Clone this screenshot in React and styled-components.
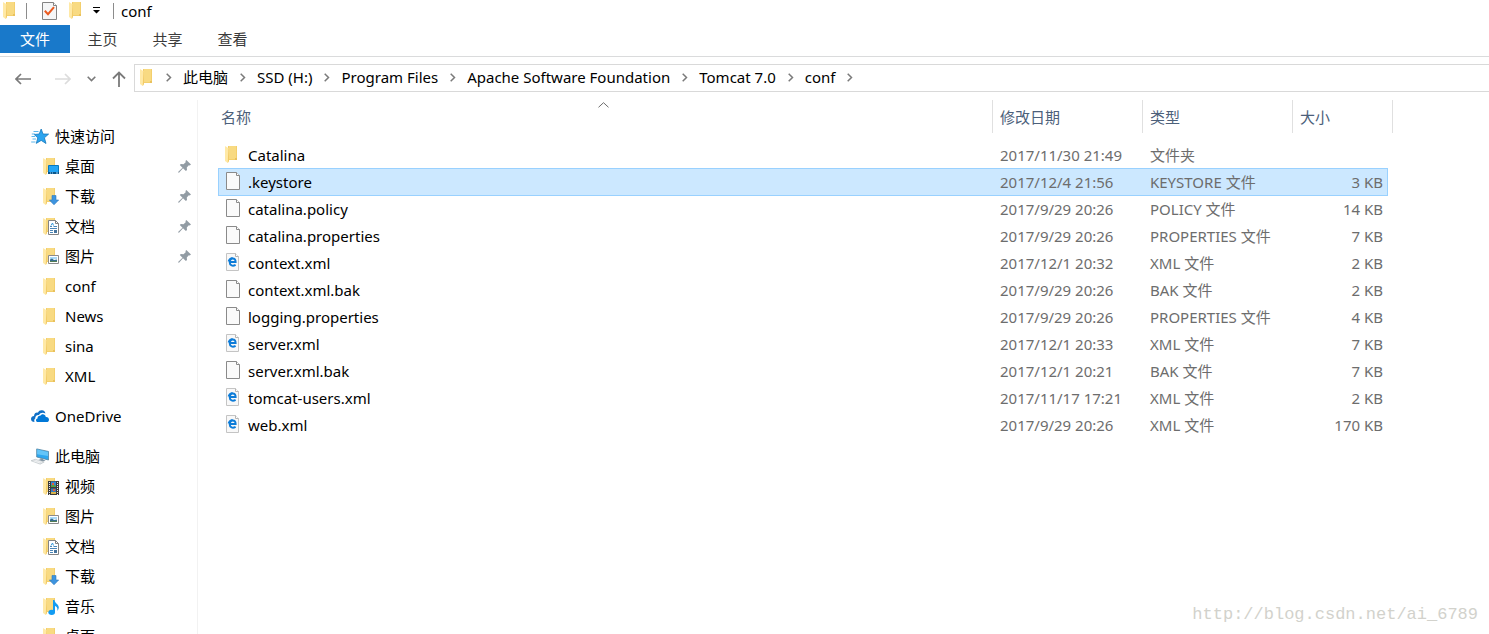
import React, { useState } from 'react'
import styled, { createGlobalStyle } from 'styled-components'

const GlobalStyle = createGlobalStyle`
  body {
    margin: 0;
    background: #ffffff;
    color: #000000;
    font-family: "Noto Sans", "Noto Sans CJK SC", sans-serif;
    font-size: 15px;
    line-height: 20px;
  }
  * {
    box-sizing: border-box;
  }
  button {
    margin: 0;
    padding: 0;
    border: 0;
    background: none;
    color: inherit;
    font: inherit;
  }
  a {
    color: inherit;
    text-decoration: none;
  }
  svg {
    display: block;
    flex: none;
  }
`

const Window = styled.div`
  display: flex;
  flex-direction: column;
  height: 100vh;
  overflow: hidden;
`

const TitleBar = styled.header`
  display: flex;
  align-items: center;
  height: 25px;
  padding: 0 3px 4px;
`

const QuickButton = styled.button`
  display: flex;
  margin-right: ${(p) => p.$after || 12}px;
`

const Divider = styled.span`
  width: 1px;
  height: 16px;
  margin-right: ${(p) => p.$after}px;
  background: #8c8c8c;
`

const WindowTitle = styled.h1`
  margin: 0;
  font-size: 15px;
  font-weight: 400;
`

const Ribbon = styled.nav`
  display: flex;
  height: 32px;
  padding-bottom: 3px;
  border-bottom: 1px solid #dadbdc;
`

const RibbonTab = styled.button`
  width: ${(p) => (p.$active ? 70 : 65)}px;
  background: ${(p) => (p.$active ? '#1979ca' : 'transparent')};
  color: ${(p) => (p.$active ? '#ffffff' : '#3b3b3b')};
`

const AddressRow = styled.div`
  display: flex;
  align-items: center;
  height: 43px;
  padding: 0 0 1px 15px;
`

const NavButtons = styled.div`
  display: flex;
  align-items: center;
  gap: 16px;
  padding: 1px 8px 0 0;
`

const NavButton = styled.button`
  display: flex;
  padding-right: ${(p) => (p.$wide ? 8 : 0)}px;
`

const AddressBar = styled.div`
  display: flex;
  flex: 1;
  align-items: center;
  height: 28px;
  padding: 0 0 2px 5px;
  border: 1px solid #d9d9d9;
  border-right: 0;
`

const Crumbs = styled.ol`
  display: flex;
  margin: 0;
  padding: 0 0 0 14px;
  list-style: none;
`

const Crumb = styled.li`
  display: flex;
  align-items: center;
  gap: 12px;
  padding-right: 11px;
`

const Body = styled.div`
  display: flex;
  flex: 1;
  min-height: 0;
`

const Sidebar = styled.nav`
  flex: none;
  width: 198px;
  padding-top: 21px;
  border-right: 1px solid #f2f2f2;
  overflow: hidden;
`

const Group = styled.div`
  margin-bottom: 10px;
`

const SideLink = styled.a`
  display: flex;
  align-items: center;
  gap: 6px;
  height: 30px;
  padding: 0 6px 0 ${(p) => (p.$root ? 31 : 43)}px;
`

const SideLabel = styled.span`
  flex: 1;
`

const Content = styled.main`
  flex: 1;
  padding: 0 96px 0 20px;
`

const FileTable = styled.table`
  width: 100%;
  border-collapse: separate;
  border-spacing: 0;
  table-layout: fixed;
`

const NameCol = styled.col``
const WideCol = styled.col`
  width: 150px;
`
const SizeCol = styled.col`
  width: 96px;
`
const EdgeCol = styled.col`
  width: 5px;
`

const HeadCell = styled.th`
  position: relative;
  height: 33px;
  padding: 0 0 0 ${(p) => (p.$first ? 3 : 7)}px;
  border-left: ${(p) => (p.$first ? 0 : '1px solid #e0e0e0')};
  border-right: ${(p) => (p.$last ? '1px solid #e0e0e0' : 0)};
  color: #4c607a;
  font-weight: 400;
  text-align: left;
`

const SortMark = styled.span`
  position: absolute;
  top: 2px;
  left: 0;
  right: 2px;
  display: flex;
  justify-content: center;
`

const FileBody = styled.tbody`
  &::before {
    content: '';
    display: block;
    height: 8px;
  }
`

const Cell = styled.td`
  height: 27px;
  padding: 0 5px 0 ${(p) => (p.$first ? 7 : 8)}px;
  color: ${(p) => (p.$first ? '#000000' : '#6d6d6d')};
  text-align: ${(p) => (p.$right ? 'right' : 'left')};
  white-space: nowrap;
`

const EdgeCell = styled.td`
  padding: 0;
`

const FileRow = styled.tr`
  ${(p) => p.$selected && `
    ${Cell} {
      background: #cce8ff;
      box-shadow: inset 0 1px #99d1ff, 0 1px #99d1ff;
    }
    ${Cell}:first-child {
      box-shadow: inset 1px 1px #99d1ff, 0 1px #99d1ff;
    }
    ${Cell}:nth-child(4) {
      box-shadow: inset -1px 1px #99d1ff, 0 1px #99d1ff;
    }
  `}
`

const FileName = styled.div`
  display: flex;
  align-items: center;
  gap: 7px;
`

const Watermark = styled.div`
  position: absolute;
  right: 11px;
  bottom: 9px;
  color: #d2d2cc;
  font-family: "Liberation Mono", monospace;
  font-size: 17px;
`

const FolderShape = () => (
  <>
    <path d="M3 0H12V14H3Z" fill="#f3cf6d" />
    <path d="M4 0H11V13H4Z" fill="#f8da82" />
    <path d="M10 12H12V14H10Z" fill="#e9c15d" />
    <path d="M0 0L4 2.6V15L2.8 17L0 15Z" fill="#ffe9a6" />
    <path d="M3.5 2.3L4 2.6V15L2.8 17V15Z" fill="#f2cb68" />
  </>
)

const FolderIcon = () => (
  <svg width="12" height="17" viewBox="0 0 12 17">
    <FolderShape />
  </svg>
)

const DocShape = () => (
  <>
    <path d="M5.5 2.5H12.5L15.5 5.5V16.5H5.5Z" fill="#ffffff" stroke="#838383" />
    <path d="M12.5 2.5V5.5H15.5" fill="none" stroke="#838383" />
    <path d="M7 8.5H9M10.5 8.5H14M7 10.5H14M7 12.5H10M7 14.5H10" stroke="#4b86b8" />
    <path d="M8 7.5L9.5 5L10.5 7.5" fill="none" stroke="#3498db" />
    <path d="M11 12H14V15H11Z" fill="#47759e" />
  </>
)

const overlays = {
  desktop: (
    <>
      <path d="M5.5 7.5H15.5V15.5H5.5Z" fill="#23a5f5" stroke="#0878be" />
      <path d="M5 14H16V16H5Z" fill="#0a568b" />
      <path d="M7 15H8M9 15H10M13 15H15" stroke="#9ed8ff" />
    </>
  ),
  download: <path d="M9 7.5H13V12H15.7L11 16.8L6.3 12H9Z" fill="#3d94df" stroke="#2d78bd" strokeWidth="0.6" />,
  document: <DocShape />,
  picture: (
    <>
      <path d="M5.5 7.5H15.5V15.5H5.5Z" fill="#ffffff" stroke="#8b8b8b" />
      <path d="M7 9H14V11H7Z" fill="#a8daf8" />
      <path d="M7 11.5L9 10.5L11 12L14 11.5V14H7Z" fill="#376d8f" />
      <path d="M7 13H14V14H7Z" fill="#537d55" />
    </>
  ),
  video: (
    <>
      <path d="M5 3H16V17H5Z" fill="#3b3b3b" />
      <path d="M6.5 4V17M14.5 4V17" stroke="#e8e8e8" strokeDasharray="1 1" />
      <path d="M8 3.5H13V9H8Z" fill="#3384cf" />
      <path d="M8 10.5H13V16H8Z" fill="#347bc3" />
      <path d="M8 7.5L10 6L13 8V9H8Z" fill="#53a047" />
      <path d="M9 5H11V7H9ZM10 11H12V13H10Z" fill="#e65c38" />
      <path d="M8 14H13V16H8Z" fill="#d7b44b" />
    </>
  ),
  music: (
    <>
      <path d="M10 2H11.5C11.5 5 16 6.5 15.8 9.5C15.7 11 15 12.3 14.3 13C15 9.8 13.5 8.6 12 8V14H10Z" fill="#129cf3" />
      <ellipse cx="8.7" cy="14.3" rx="3.3" ry="2.6" fill="#129cf3" />
    </>
  ),
}

const LibraryIcon = ({ kind }) => (
  <svg width="16" height="17" viewBox="0 0 16 17">
    <FolderShape />
    {overlays[kind]}
  </svg>
)

const StarIcon = () => (
  <svg width="18" height="17" viewBox="0 0 18 17">
    <path d="M10.2 1L12 6L17.6 6.1L13.4 9.8L15 15.5L10.2 12.4L5.3 15.4L6.8 9.8L3.2 6.5L8.2 6Z" fill="#2ba4ef" stroke="#1679bd" strokeWidth="0.8" />
    <path d="M2.5 3.5H7.5M0.8 6H4M0.5 8.5H4M1.5 11H5M0.2 14H4.5" stroke="#4aaeea" strokeWidth="0.9" />
  </svg>
)

const CloudIcon = () => (
  <svg width="18" height="13" viewBox="0 0 18 13">
    <path d="M0 9C0 7 1.5 6 3 6C3.2 3.5 5 2.3 6.8 2.7C7.7 0.7 9.3 0 11 0.2C13 0.4 14.2 1.8 14.4 3.5C11.8 2 9 3 8 5C5.5 4.8 4 6.5 4.3 8.5C3.2 9 3 10.5 3.5 12C1.4 12 0 10.8 0 9Z" fill="#0f6fc6" />
    <path d="M5 10.5C4.8 9.3 5.6 8.6 6.5 8.4C6.4 6.5 8 5.3 9.4 5.8C10.3 3.6 14.4 3.6 14.8 7C16.8 6.8 18 8.2 18 9.7C18 11.2 17 12 15.8 12H6.7C5.7 12 5.1 11.4 5 10.5Z" fill="#0078d7" />
  </svg>
)

const ComputerIcon = () => (
  <svg width="18" height="17" viewBox="0 0 19 17">
    <path d="M6 0.5L18.5 3.2V12.2L6 9Z" fill="#2ea7ef" stroke="#4e7f9c" strokeWidth="0.8" />
    <path d="M6.5 1.2L18 3.8V8L6.5 6Z" fill="#64c5f8" />
    <path d="M10 10.2L13 11V12L15.5 12.7L12.5 13.8L7.5 12.3L10 11.5Z" fill="#8496a3" />
    <path d="M0 13L4.5 11.4L14 14.3L9.7 16.6Z" fill="#d9dde0" stroke="#adb4b9" strokeWidth="0.5" />
    <path d="M2.5 13.2L9.8 15.4M4.5 12.4L11.8 14.6" stroke="#ffffff" strokeWidth="0.6" />
  </svg>
)

const PinIcon = () => (
  <svg width="13" height="13" viewBox="0 0 13 13">
    <path d="M8.3 0L13 4.6L11.7 5.4L10.8 5.2L8.8 7.4L9 10L7.9 11L5 8.3L1 12.7L0.2 12.6L0.3 11.8L4.5 7.8L1.8 5L2.8 4L5.5 4.2L7.7 2.2L7.5 1Z" fill="#929ca4" />
  </svg>
)

const FileIcon = () => (
  <svg width="16" height="20" viewBox="0 0 16 20">
    <path d="M1.5 0.5H11.5L14.5 3.5V17.5H1.5Z" fill="#fafafa" stroke="#8a8a8a" />
    <path d="M11.5 0.5V3.5H14.5" fill="#ffffff" stroke="#8a8a8a" />
  </svg>
)

const XmlIcon = () => (
  <svg width="16" height="20" viewBox="0 0 16 20">
    <path d="M1.5 0.5H10.5L13.5 3.5V17.5H1.5Z" fill="#f8f8f8" stroke="#c4c4c4" />
    <path d="M10.5 0.5V3.5H13.5" fill="#ffffff" stroke="#b5b5b5" />
    <path d="M4.6 9.1H10.6C10.6 6.9 9.6 5.5 7.8 5.5C5.9 5.5 4.7 7 4.7 9C4.7 12.8 7.8 13.4 10.6 11.9" fill="none" stroke="#0d7cd8" strokeWidth="2" />
    <path d="M3.2 8.4C4 6.2 5.4 4.9 7.6 4.6" fill="none" stroke="#0d7cd8" strokeWidth="1.2" />
  </svg>
)

const PropertiesIcon = () => (
  <svg width="15" height="18" viewBox="0 0 15 18">
    <path d="M0.5 0.5H11.5L14.5 3.5V17.5H0.5Z" fill="#f5f6f7" stroke="#848484" />
    <path d="M11.5 0.5V3.5H14.5" fill="#ffffff" stroke="#848484" />
    <path d="M2.8 8.8L6 12.2L12 5.2" fill="none" stroke="#ea5a20" strokeWidth="2" />
  </svg>
)

const MenuMark = () => (
  <svg width="7" height="7" viewBox="0 0 7 7">
    <path d="M0 0H7V1H0ZM0 3H7L3.5 6.5Z" fill="#000000" />
  </svg>
)

const ArrowIcon = ({ color, flip }) => (
  <svg width="16" height="12" viewBox="0 0 16 12">
    <path d={flip ? 'M0 6H15M10 1L15 6L10 11' : 'M16 6H1M6 1L1 6L6 11'} fill="none" stroke={color} strokeWidth="1.7" />
  </svg>
)

const UpIcon = () => (
  <svg width="14" height="16" viewBox="0 0 14 16">
    <path d="M7 16V1.5M1 7.5L7 1.5L13 7.5" fill="none" stroke="#7a7a7a" strokeWidth="1.8" />
  </svg>
)

const ChevronDown = () => (
  <svg width="9" height="6" viewBox="0 0 9 6">
    <path d="M0.7 0.7L4.5 4.5L8.3 0.7" fill="none" stroke="#7a7a7a" strokeWidth="1.6" />
  </svg>
)

const ChevronRight = () => (
  <svg width="6" height="9" viewBox="0 0 6 9">
    <path d="M0.7 0.7L4.5 4.5L0.7 8.3" fill="none" stroke="#7a7a7a" strokeWidth="1.5" />
  </svg>
)

const SortIcon = () => (
  <svg width="11" height="6" viewBox="0 0 11 6">
    <path d="M0.5 5.3L5.5 0.7L10.5 5.3" fill="none" stroke="#6d6d6d" />
  </svg>
)

const tabs = ['主页', '共享', '查看']

const crumbs = ['此电脑', 'SSD (H:)', 'Program Files', 'Apache Software Foundation', 'Tomcat 7.0', 'conf']

const quickAccess = [
  { name: '桌面', kind: 'desktop', pinned: true },
  { name: '下载', kind: 'download', pinned: true },
  { name: '文档', kind: 'document', pinned: true },
  { name: '图片', kind: 'picture', pinned: true },
  { name: 'conf' },
  { name: 'News' },
  { name: 'sina' },
  { name: 'XML' },
]

const computer = [
  { name: '视频', kind: 'video' },
  { name: '图片', kind: 'picture' },
  { name: '文档', kind: 'document' },
  { name: '下载', kind: 'download' },
  { name: '音乐', kind: 'music' },
  { name: '桌面', kind: 'desktop' },
]

const files = [
  { name: 'Catalina', date: '2017/11/30 21:49', type: '文件夹', size: '', icon: 'folder' },
  { name: '.keystore', date: '2017/12/4 21:56', type: 'KEYSTORE 文件', size: '3 KB' },
  { name: 'catalina.policy', date: '2017/9/29 20:26', type: 'POLICY 文件', size: '14 KB' },
  { name: 'catalina.properties', date: '2017/9/29 20:26', type: 'PROPERTIES 文件', size: '7 KB' },
  { name: 'context.xml', date: '2017/12/1 20:32', type: 'XML 文件', size: '2 KB', icon: 'xml' },
  { name: 'context.xml.bak', date: '2017/9/29 20:26', type: 'BAK 文件', size: '2 KB' },
  { name: 'logging.properties', date: '2017/9/29 20:26', type: 'PROPERTIES 文件', size: '4 KB' },
  { name: 'server.xml', date: '2017/12/1 20:33', type: 'XML 文件', size: '7 KB', icon: 'xml' },
  { name: 'server.xml.bak', date: '2017/12/1 20:21', type: 'BAK 文件', size: '7 KB' },
  { name: 'tomcat-users.xml', date: '2017/11/17 17:21', type: 'XML 文件', size: '2 KB', icon: 'xml' },
  { name: 'web.xml', date: '2017/9/29 20:26', type: 'XML 文件', size: '170 KB', icon: 'xml' },
]

const IconSlot = styled.span`
  display: flex;
  width: 16px;
`

const fileIcon = (icon) => {
  if (icon === 'folder') return <FolderIcon />
  if (icon === 'xml') return <XmlIcon />
  return <FileIcon />
}

const SideItem = ({ item }) => (
  <SideLink href="#">
    <IconSlot>{item.kind ? <LibraryIcon kind={item.kind} /> : <FolderIcon />}</IconSlot>
    <SideLabel>{item.name}</SideLabel>
    {item.pinned && <PinIcon />}
  </SideLink>
)

const App = () => {
  const [selected, setSelected] = useState('.keystore')

  return (
    <Window>
      <GlobalStyle />
      <TitleBar>
        <QuickButton aria-label="conf" $after={11}><FolderIcon /></QuickButton>
        <Divider $after={15} />
        <QuickButton aria-label="属性"><PropertiesIcon /></QuickButton>
        <QuickButton aria-label="新建文件夹"><FolderIcon /></QuickButton>
        <QuickButton aria-label="自定义快速访问工具栏" $after={13}><MenuMark /></QuickButton>
        <Divider $after={7} />
        <WindowTitle>conf</WindowTitle>
      </TitleBar>
      <Ribbon>
        <RibbonTab $active>文件</RibbonTab>
        {tabs.map((tab) => <RibbonTab key={tab}>{tab}</RibbonTab>)}
      </Ribbon>
      <AddressRow>
        <NavButtons>
          <NavButton aria-label="后退" $wide><ArrowIcon color="#7a7a7a" /></NavButton>
          <NavButton aria-label="前进" disabled><ArrowIcon color="#dcdcdc" flip /></NavButton>
          <NavButton aria-label="最近浏览的位置"><ChevronDown /></NavButton>
          <NavButton aria-label="上移"><UpIcon /></NavButton>
        </NavButtons>
        <AddressBar>
          <FolderIcon />
          <Crumbs>
            <Crumb><ChevronRight /></Crumb>
            {crumbs.map((crumb) => (
              <Crumb key={crumb}>
                <a href="#">{crumb}</a>
                <ChevronRight />
              </Crumb>
            ))}
          </Crumbs>
        </AddressBar>
      </AddressRow>
      <Body>
        <Sidebar>
          <Group>
            <SideLink href="#" $root><StarIcon /><SideLabel>快速访问</SideLabel></SideLink>
            {quickAccess.map((item) => <SideItem key={item.name} item={item} />)}
          </Group>
          <Group>
            <SideLink href="#" $root><CloudIcon /><SideLabel>OneDrive</SideLabel></SideLink>
          </Group>
          <Group>
            <SideLink href="#" $root><ComputerIcon /><SideLabel>此电脑</SideLabel></SideLink>
            {computer.map((item) => <SideItem key={item.name} item={item} />)}
          </Group>
        </Sidebar>
        <Content>
          <FileTable>
            <colgroup>
              <NameCol />
              <WideCol />
              <WideCol />
              <SizeCol />
              <EdgeCol />
            </colgroup>
            <thead>
              <tr>
                <HeadCell $first>
                  <SortMark><SortIcon /></SortMark>
                  <button>名称</button>
                </HeadCell>
                <HeadCell><button>修改日期</button></HeadCell>
                <HeadCell><button>类型</button></HeadCell>
                <HeadCell $last colSpan={2}><button>大小</button></HeadCell>
              </tr>
            </thead>
            <FileBody>
              {files.map((file) => (
                <FileRow key={file.name} $selected={file.name === selected} onClick={() => setSelected(file.name)}>
                  <Cell $first>
                    <FileName>
                      <IconSlot>{fileIcon(file.icon)}</IconSlot>
                      {file.name}
                    </FileName>
                  </Cell>
                  <Cell>{file.date}</Cell>
                  <Cell>{file.type}</Cell>
                  <Cell $right>{file.size}</Cell>
                  <EdgeCell />
                </FileRow>
              ))}
            </FileBody>
          </FileTable>
        </Content>
      </Body>
      <Watermark>http://blog.csdn.net/ai_6789</Watermark>
    </Window>
  )
}

export default App
